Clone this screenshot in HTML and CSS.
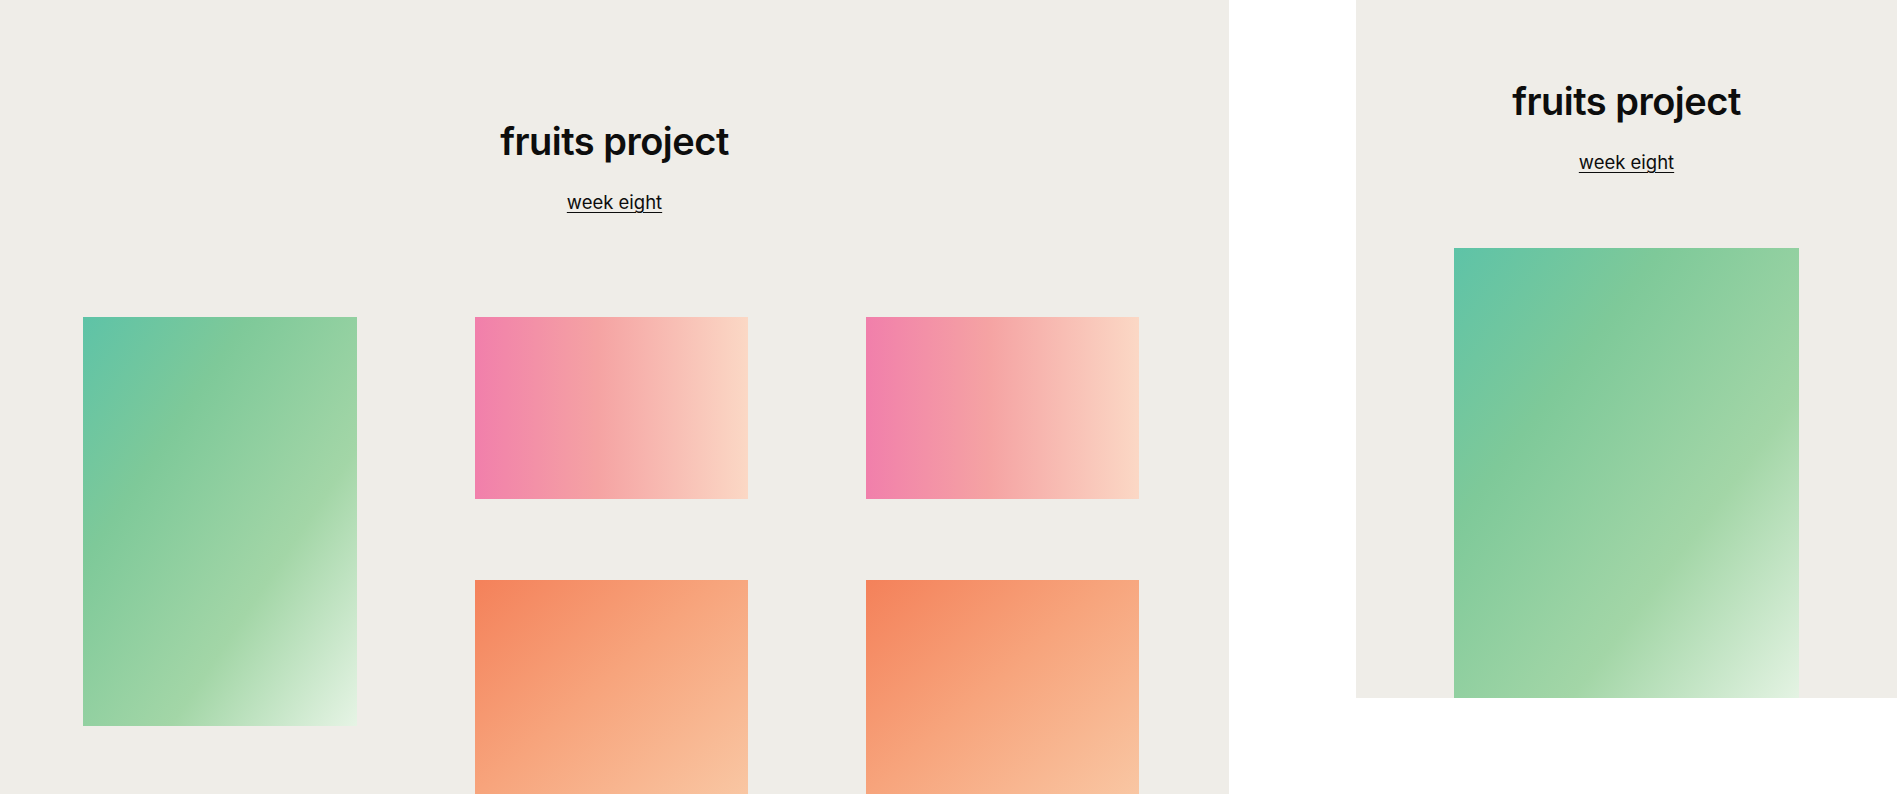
FILE: index.html
```html
<!DOCTYPE html>
<html lang="en">
<head>
<meta charset="utf-8">
<title>fruits project</title>
<link rel="stylesheet" href="styles.css">
</head>
<body>
  <main class="stage">
    <section class="frame frame-desktop">
      <header class="masthead">
        <h1 class="title">fruits project</h1>
        <a class="week-link" href="#">week eight</a>
      </header>
      <div class="fruit-grid">
        <div class="fruit fruit-green fruit-tall"></div>
        <div class="fruit fruit-pink"></div>
        <div class="fruit fruit-pink"></div>
        <div class="fruit fruit-orange"></div>
        <div class="fruit fruit-orange"></div>
      </div>
    </section>
    <section class="frame frame-mobile">
      <header class="masthead">
        <h1 class="title">fruits project</h1>
        <a class="week-link" href="#">week eight</a>
      </header>
      <div class="fruit-stack">
        <div class="fruit fruit-green fruit-mobile"></div>
      </div>
    </section>
  </main>
</body>
</html>
```
FILE: styles.css
```css
html, body {
  margin: 0;
  padding: 0;
  height: 794px;
  overflow: hidden;
  background: #ffffff;
}

body {
  font-family: "Inter", "Lato", "Liberation Sans", sans-serif;
  color: #0d0d0d;
}

.stage {
  display: flex;
  align-items: flex-start;
  gap: 127px;
}

.frame {
  background: #efede8;
  overflow: hidden;
  box-sizing: border-box;
}

.frame-desktop {
  width: 1229px;
  height: 794px;
  padding: 117px 83px 0;
}

.frame-mobile {
  width: 541px;
  height: 698px;
  padding: 77px 98px 0;
}

.masthead {
  display: flex;
  flex-direction: column;
  align-items: center;
}

.title {
  margin: 0;
  font-size: 38px;
  line-height: 48px;
  font-weight: 600;
  letter-spacing: -0.5px;
}

.week-link {
  margin-top: 25px;
  font-size: 18.5px;
  line-height: 24px;
  color: #0d0d0d;
  text-decoration: underline;
  text-decoration-thickness: 1px;
  text-underline-offset: 3px;
}

.fruit-grid {
  margin-top: 103px;
  display: grid;
  grid-template-columns: 274px 273px 273px;
  column-gap: 118px;
  row-gap: 81px;
  grid-template-rows: 182px 240px;
}

.fruit-tall {
  grid-row: 1 / span 2;
  height: 409px;
}

.frame-mobile .fruit-stack {
  margin-top: 74px;
}

.fruit-mobile {
  height: 460px;
}

.fruit-green {
  background: linear-gradient(to bottom right, #5ec3a7 0%, #7ec999 30%, #a3d6a7 66%, #e6f4e5 100%);
}

.fruit-pink {
  background: linear-gradient(90deg, #f17fab 0%, #f5a3a3 45%, #fbd8c5 100%);
}

.fruit-orange {
  background: linear-gradient(to bottom right, #f4815a 0%, #f7a47c 45%, #f9caa7 100%);
}
```
